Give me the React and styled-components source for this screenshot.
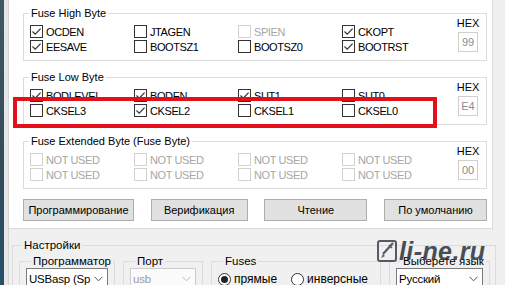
import React from 'react';
import styled, { createGlobalStyle } from 'styled-components';

const GlobalStyle = createGlobalStyle`
  html, body {
    margin: 0;
    padding: 0;
    background: #f0f0f0;
  }
  body {
    font-family: "Liberation Sans", Tahoma, Arial, sans-serif;
    font-size: 11px;
    color: #000;
  }
`;

const Window = styled.div`
  position: relative;
  width: 505px;
  height: 285px;
  overflow: hidden;
  display: flex;
  background: #f0f0f0;
`;

const LeftEdge = styled.div`
  width: 9px;
  flex: none;
  display: flex;
  .dark {
    width: 4px;
    background: linear-gradient(#3f5868, #334a5a 60%, #24506a);
  }
  .light {
    flex: 1;
    background: #e6e6e6;
    border-right: 1px solid #d4d4d4;
  }
`;

const Main = styled.div`
  flex: 1;
  display: flex;
  flex-direction: column;
`;

const TopPanel = styled.div`
  position: relative;
  width: 484px;
  box-sizing: border-box;
  background: #fff;
  border-right: 1px solid #dadada;
  border-bottom: 1px solid #dadada;
  padding: 6px 5px 7px 14px;
  display: flex;
  flex-direction: column;
`;

const Group = styled.fieldset`
  margin: ${(p) => (p.$first ? '0' : '9px')} 0 0 0;
  padding: 0;
  border: 1px solid #dcdcdc;
  min-inline-size: 0;
  legend {
    margin-left: 5px;
    padding: 0 2px;
    line-height: 14px;
    font-size: 11px;
  }
`;

const GroupBody = styled.div`
  display: flex;
  align-items: flex-start;
`;

const Grid = styled.div`
  display: grid;
  grid-template-columns: repeat(4, 104px);
  grid-auto-rows: 15px;
  padding: 4px 0 6px 6px;
`;

const Item = styled.label`
  display: flex;
  align-items: center;
  gap: 3px;
  letter-spacing: -0.4px;
  color: ${(p) => (p.$disabled ? '#a6a6a6' : '#000')};
`;

const Box = styled.span`
  width: 13px;
  height: 13px;
  box-sizing: border-box;
  border: 1px solid ${(p) => (p.$disabled ? '#d2d2d2' : '#333')};
  background: #fff;
  display: flex;
  align-items: center;
  justify-content: center;
  flex: none;
`;

const HexCol = styled.div`
  margin: -3px 5px 0 auto;
  width: 26px;
  display: flex;
  flex-direction: column;
  align-items: center;
  .label {
    line-height: 12px;
  }
`;

const HexBox = styled.div`
  margin-top: 3px;
  width: 20px;
  height: 20px;
  box-sizing: border-box;
  border: 1px solid #cfcfcf;
  color: #8c8c8c;
  display: flex;
  align-items: center;
  justify-content: center;
`;

const ButtonRow = styled.div`
  margin-top: 10px;
  display: flex;
  justify-content: space-between;
`;

const Button = styled.button`
  width: ${(p) => p.$w}px;
  height: 22px;
  padding: 0;
  font-family: inherit;
  font-size: 11px;
  color: #000;
  background: #e1e1e1;
  border: 1px solid #adadad;
`;

const Highlight = styled.div`
  position: absolute;
  left: 4px;
  top: 97px;
  width: 424px;
  height: 31px;
  box-sizing: border-box;
  border: 4px solid #e3101b;
  pointer-events: none;
`;

const Settings = styled.fieldset`
  margin: 9px 9px 0 3px;
  padding: 2px 0 0 6px;
  border: 1px solid #dcdcdc;
  border-bottom: none;
  min-inline-size: 0;
  font-size: 11.5px;
  display: flex;
  legend {
    margin-left: 3px;
    padding: 0 2px;
    line-height: 14px;
  }
`;

const SubRow = styled.div`
  display: flex;
  gap: 8px;
`;

const SubGroup = styled.fieldset`
  margin: 0;
  width: ${(p) => p.$w}px;
  box-sizing: border-box;
  padding: 0 6px;
  border: 1px solid #dcdcdc;
  border-bottom: none;
  min-inline-size: 0;
  height: 40px;
  legend {
    margin-left: 5px;
    padding: 0 2px;
    line-height: 14px;
    white-space: nowrap;
  }
`;

const Combo = styled.div`
  width: ${(p) => p.$w}px;
  height: 21px;
  box-sizing: border-box;
  border: 1px solid ${(p) => (p.$disabled ? '#cccccc' : '#7a7a7a')};
  background: ${(p) => (p.$disabled ? '#fbfbfb' : '#fff')};
  color: ${(p) => (p.$disabled ? '#9a9a9a' : '#000')};
  font-size: 11.5px;
  letter-spacing: -0.2px;
  display: flex;
  align-items: center;
  gap: 2px;
  padding: 0 4px 0 2px;
  white-space: nowrap;
  .value {
    flex: 1;
  }
  svg {
    flex: none;
  }
`;

const RadioRow = styled.div`
  margin-top: 4px;
  display: flex;
  gap: 14px;
`;

const Radio = styled.label`
  display: flex;
  align-items: center;
  gap: 3px;
  font-size: 12px;
  .dot {
    width: 13px;
    height: 13px;
    box-sizing: border-box;
    border: 1px solid #333;
    border-radius: 50%;
    background: #fff;
    display: flex;
    align-items: center;
    justify-content: center;
  }
  .dot::after {
    content: '';
    width: 7px;
    height: 7px;
    border-radius: 50%;
    background: ${(p) => (p.$on ? '#222' : 'transparent')};
  }
`;

const Watermark = styled.div`
  position: absolute;
  left: 377px;
  top: 240px;
  display: flex;
  align-items: center;
  gap: 2px;
  opacity: 0.85;
  pointer-events: none;
  .text {
    font-family: "Liberation Sans", Arial, sans-serif;
    font-weight: bold;
    font-style: italic;
    font-size: 25px;
    line-height: 22px;
    letter-spacing: 0.4px;
    color: #2a323c;
  }
`;

const Check = () => (
  <svg width="11" height="11" viewBox="0 0 11 11">
    <path d="M1.5 5.5 L4.2 8.2 L9.6 2.6" fill="none" stroke="#333" strokeWidth="1.2" />
  </svg>
);

const Chevron = ({ color = '#555' }) => (
  <svg width="9" height="6" viewBox="0 0 9 6">
    <path d="M0.5 0.8 L4.5 4.8 L8.5 0.8" fill="none" stroke={color} strokeWidth="1" />
  </svg>
);

const Checkbox = ({ label, checked, disabled }) => (
  <Item $disabled={disabled}>
    <Box $disabled={disabled}>{checked && <Check />}</Box>
    {label}
  </Item>
);

const high = [
  ['OCDEN', 1], ['JTAGEN', 0], ['SPIEN', 0, 1], ['CKOPT', 1],
  ['EESAVE', 1], ['BOOTSZ1', 0], ['BOOTSZ0', 0], ['BOOTRST', 1],
];
const low = [
  ['BODLEVEL', 1], ['BODEN', 1], ['SUT1', 1], ['SUT0', 0],
  ['CKSEL3', 0], ['CKSEL2', 1], ['CKSEL1', 0], ['CKSEL0', 0],
];
const ext = Array.from({ length: 8 }, () => ['NOT USED', 0, 1]);

const FuseGroup = ({ title, items, hex, first }) => (
  <Group $first={first}>
    <legend>{title}</legend>
    <GroupBody>
      <Grid>
        {items.map(([label, checked, disabled], i) => (
          <Checkbox key={i} label={label} checked={!!checked} disabled={!!disabled} />
        ))}
      </Grid>
      <HexCol>
        <span className="label">HEX</span>
        <HexBox>{hex}</HexBox>
      </HexCol>
    </GroupBody>
  </Group>
);

const App = () => (
  <>
    <GlobalStyle />
    <Window>
      <LeftEdge>
        <div className="dark" />
        <div className="light" />
      </LeftEdge>
      <Main>
        <TopPanel>
          <FuseGroup first title="Fuse High Byte" items={high} hex="99" />
          <FuseGroup title="Fuse Low Byte" items={low} hex="E4" />
          <FuseGroup title="Fuse Extended Byte (Fuse Byte)" items={ext} hex="00" />
          <ButtonRow>
            <Button $w={111}>Программирование</Button>
            <Button $w={97}>Верификация</Button>
            <Button $w={103}>Чтение</Button>
            <Button $w={103}>По умолчанию</Button>
          </ButtonRow>
          <Highlight />
        </TopPanel>
        <Settings>
          <legend>Настройки</legend>
          <SubRow>
            <SubGroup $w={96}>
              <legend>Программатор</legend>
              <Combo $w={82}>
                <span className="value">USBasp (Sp</span>
                <Chevron />
              </Combo>
            </SubGroup>
            <SubGroup $w={80}>
              <legend>Порт</legend>
              <Combo $w={66} $disabled>
                <span className="value">usb</span>
                <Chevron color="#bbb" />
              </Combo>
            </SubGroup>
            <SubGroup $w={170}>
              <legend>Fuses</legend>
              <RadioRow>
                <Radio $on>
                  <span className="dot" />
                  прямые
                </Radio>
                <Radio>
                  <span className="dot" />
                  инверсные
                </Radio>
              </RadioRow>
            </SubGroup>
            <SubGroup $w={101}>
              <legend>Выберете язык</legend>
              <Combo $w={87}>
                <span className="value">Русский</span>
                <Chevron />
              </Combo>
            </SubGroup>
          </SubRow>
        </Settings>
      </Main>
      <Watermark>
        <svg width="20" height="22" viewBox="0 0 20 22">
          <rect x="1" y="1" width="18" height="20" rx="2" fill="none" stroke="#3a424c" strokeWidth="2" />
          <path d="M16 3 L6 14" stroke="#3a424c" strokeWidth="2.2" />
          <path d="M6 14 L4 18 L8 16 Z" fill="#3a424c" />
          <path d="M12 5 L15 8" stroke="#3a424c" strokeWidth="1.5" />
        </svg>
        <span className="text">li-ne.ru</span>
      </Watermark>
    </Window>
  </>
);

export default App;
